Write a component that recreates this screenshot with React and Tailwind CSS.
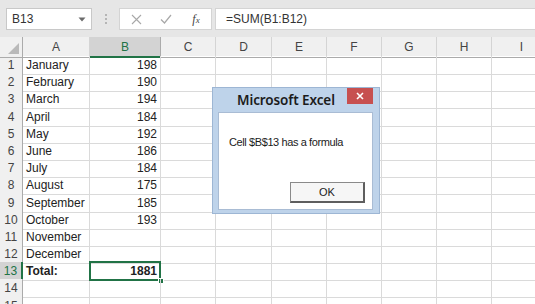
import React from "react";

const cols = [
  { l: "A", w: 67 },
  { l: "B", w: 71 },
  { l: "C", w: 55 },
  { l: "D", w: 56 },
  { l: "E", w: 55 },
  { l: "F", w: 55 },
  { l: "G", w: 55 },
  { l: "H", w: 55 },
  { l: "I", w: 60 },
];

const data = [
  ["January", "198"],
  ["February", "190"],
  ["March", "194"],
  ["April", "184"],
  ["May", "192"],
  ["June", "186"],
  ["July", "184"],
  ["August", "175"],
  ["September", "185"],
  ["October", "193"],
  ["November", ""],
  ["December", ""],
  ["Total:", "1881"],
  ["", ""],
  ["", ""],
];

const gridCols = "grid grid-cols-[23px_67px_71px_55px_56px_55px_55px_55px_55px_60px]";

function Toolbar() {
  return (
    <div className="h-[37px] bg-[#e6e6e6] flex items-start pt-[8px] shrink-0">
      <div className="ml-[6px] w-[86px] h-[22px] bg-white border border-[#c8c8c8] flex items-center justify-between pl-[5px] pr-[5px]">
        <span className="text-[12px] text-[#333]">B13</span>
        <svg width="8" height="5" viewBox="0 0 8 5"><path d="M0.5 0.5 L7.5 0.5 L4 4.5 Z" fill="#6b6b6b" /></svg>
      </div>
      <div className="w-[27px] h-[22px] flex flex-col items-center justify-center gap-[2px]">
        <span className="w-[2px] h-[2px] bg-[#b5b5b5]" />
        <span className="w-[2px] h-[2px] bg-[#b5b5b5]" />
        <span className="w-[2px] h-[2px] bg-[#b5b5b5]" />
      </div>
      <div className="w-[93px] h-[22px] bg-white border border-[#d4d4d4] flex items-center">
        <div className="w-[30px] flex justify-center ml-[1px]">
          <svg width="11" height="11" viewBox="0 0 11 11"><path d="M1 1 L10 10 M10 1 L1 10" stroke="#a8a8a8" strokeWidth="1.1" fill="none" /></svg>
        </div>
        <div className="w-[30px] flex justify-center">
          <svg width="12" height="10" viewBox="0 0 12 10"><path d="M1 5.5 L4.5 9 L11 1" stroke="#a8a8a8" strokeWidth="1.2" fill="none" /></svg>
        </div>
        <div className="w-[30px] flex justify-center">
          <span className="text-[12px] italic text-[#444] font-['Liberation_Serif',serif]">f<span className="text-[9px]">x</span></span>
        </div>
      </div>
      <div className="ml-[3px] flex-1 h-[22px] bg-white border-y border-l border-[#d4d4d4] flex items-center pl-[10px]">
        <span className="text-[12px] text-[#333]">=SUM(B1:B12)</span>
      </div>
    </div>
  );
}

function HeaderRow() {
  return (
    <div className={`${gridCols} h-[19px] bg-[#f0f0f0]`}>
      <div className="relative border-r border-b border-[#ababab] bg-[#f0f0f0]">
        <svg className="absolute right-[3px] bottom-[3px]" width="11" height="11" viewBox="0 0 11 11">
          <path d="M11 0 L11 11 L0 11 Z" fill="#b9b9b9" />
        </svg>
      </div>
      {cols.map((c) =>
        c.l === "B" ? (
          <div key={c.l} className="bg-[#d3d3d3] border-r border-[#ababab] border-b-2 border-b-[#217346] flex items-center justify-center text-[12px] text-[#217346] pt-[1px]">
            {c.l}
          </div>
        ) : (
          <div key={c.l} className="border-r border-[#d4d4d4] border-b border-b-[#ababab] flex items-center justify-center text-[12px] text-[#444]">
            {c.l}
          </div>
        )
      )}
    </div>
  );
}

function Row({ i, r }) {
  const sel = i === 13;
  return (
    <div className={`${gridCols} h-[17.2px]`}>
      <div
        className={
          sel
            ? "bg-[#d3d3d3] border-b border-[#d4d4d4] border-r-2 border-r-[#217346] flex items-center justify-center text-[12px] text-[#217346]"
            : "bg-[#f0f0f0] border-b border-[#d4d4d4] border-r border-r-[#ababab] flex items-center justify-center text-[12px] text-[#444]"
        }
      >
        {i}
      </div>
      <div className={`border-r border-b border-[#dadada] flex items-center pl-[3px] text-[12px] text-[#222] whitespace-nowrap ${sel ? "font-bold" : ""}`}>
        {r[0]}
      </div>
      <div className={`relative border-r border-b border-[#dadada] flex items-center justify-end pr-[3px] text-[12px] text-[#222] ${sel ? "font-bold" : ""}`}>
        {r[1]}
        {sel && (
          <>
            <div className="absolute -left-[1px] -top-[1px] -right-[1px] -bottom-[1px] border-2 border-[#217346]" />
            <div className="absolute -right-[4px] -bottom-[4px] w-[6px] h-[6px] bg-[#217346] border border-white" />
          </>
        )}
      </div>
      {cols.slice(2).map((c) => (
        <div key={c.l} className="border-r border-b border-[#dadada]" />
      ))}
    </div>
  );
}

function Dialog() {
  return (
    <div className="absolute left-[212px] top-[87px] w-[168px] h-[127px] bg-[#bed3ea] border border-[#9db6d4] flex flex-col">
      <div className="h-[24px] relative shrink-0">
        <span className="absolute left-[24px] top-[4px] text-[13.5px] font-semibold text-[#1b1b1b] font-['Noto_Sans',sans-serif] leading-[16px] tracking-[-0.1px]">
          Microsoft Excel
        </span>
        <div className="absolute right-[6px] top-0 w-[26px] h-[16px] bg-[#c75050] flex items-center justify-center">
          <svg width="8" height="8" viewBox="0 0 8 8"><path d="M1 1 L7 7 M7 1 L1 7" stroke="#ffffff" strokeWidth="1.6" fill="none" /></svg>
        </div>
      </div>
      <div className="mx-[5px] mb-[3px] mr-[6px] flex-1 bg-white border border-[#a9bcd4] flex flex-col">
        <div className="pl-[10px] pt-[22px] text-[11px] text-[#1b1b1b] tracking-[-0.4px] leading-[14px]">
          Cell $B$13 has a formula
        </div>
        <div className="flex-1" />
        <div className="flex justify-end pr-[7px] pb-[6px]">
          <div className="w-[75px] h-[21px] bg-[#f6f6f6] border border-[#8a8a8a] border-r-2 border-b-2 border-r-[#5e5e5e] border-b-[#5e5e5e] flex items-center justify-center text-[11px] text-[#1b1b1b]">
            OK
          </div>
        </div>
      </div>
    </div>
  );
}

export default function App() {
  return (
    <div className="w-[535px] h-[304px] overflow-hidden bg-white relative font-['Liberation_Sans',Arial,sans-serif] flex flex-col">
      <Toolbar />
      <HeaderRow />
      {data.map((r, idx) => (
        <Row key={idx} i={idx + 1} r={r} />
      ))}
      <Dialog />
    </div>
  );
}
